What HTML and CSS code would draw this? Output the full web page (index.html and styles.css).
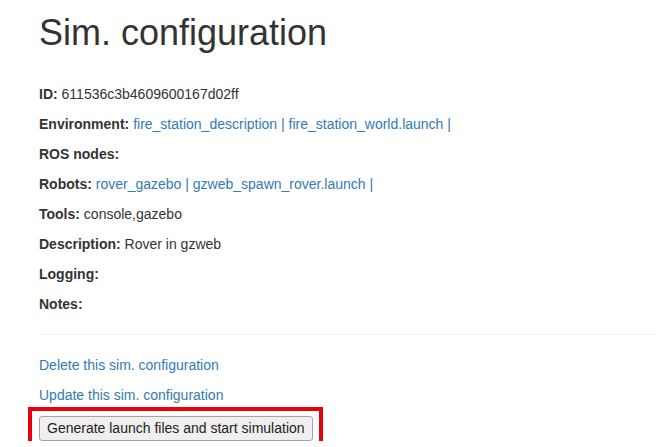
FILE: index.html
```html
<!DOCTYPE html>
<html lang="en">
<head>
<meta charset="utf-8">
<title>Sim. configuration</title>
<link rel="stylesheet" href="styles.css">
</head>
<body>
<div class="container">
  <h1 class="title">Sim. configuration</h1>
  <p class="field"><strong>ID:</strong> 611536c3b4609600167d02ff</p>
  <p class="field"><strong>Environment:</strong> <a href="#">fire_station_description</a> <span class="sep">|</span> <a href="#">fire_station_world.launch</a> <span class="sep">|</span></p>
  <p class="field"><strong>ROS nodes:</strong></p>
  <p class="field"><strong>Robots:</strong> <a href="#">rover_gazebo</a> <span class="sep">|</span> <a href="#">gzweb_spawn_rover.launch</a> <span class="sep">|</span></p>
  <p class="field"><strong>Tools:</strong> console,gazebo</p>
  <p class="field"><strong>Description:</strong> Rover in gzweb</p>
  <p class="field"><strong>Logging:</strong></p>
  <p class="field"><strong>Notes:</strong></p>
  <hr class="divider">
  <p class="field"><a href="#">Delete this sim. configuration</a></p>
  <p class="field"><a href="#">Update this sim. configuration</a></p>
  <div class="actions">
    <span class="highlight"><button class="btn" type="button">Generate launch files and start simulation</button></span>
  </div>
</div>
</body>
</html>
```
FILE: styles.css
```css
html, body {
  margin: 0;
  padding: 0;
  background: #fff;
}
body {
  font-family: "Liberation Sans", Arial, sans-serif;
  font-size: 14px;
  line-height: 20px;
  color: #333;
  overflow: hidden;
}
.container {
  padding-left: 39px;
}
.title {
  font-size: 36px;
  font-weight: normal;
  line-height: 40px;
  margin: 13px 0 31px;
  color: #333;
}
.field {
  margin: 0 0 10px;
}
.field strong {
  font-weight: bold;
}
a, .sep {
  color: #337ab7;
  text-decoration: none;
}
.divider {
  border: 0;
  border-top: 1px solid #eee;
  margin: 20px 0;
  height: 0;
}
.actions {
  padding-top: 1px;
}
.highlight {
  position: relative;
  display: inline-block;
}
.highlight::after {
  content: "";
  position: absolute;
  top: -9px;
  left: -11px;
  right: -10px;
  bottom: -8px;
  border: 4px solid #e8000b;
  pointer-events: none;
}
.btn {
  font-family: "Liberation Sans", Arial, sans-serif;
  font-size: 14px;
  line-height: 20px;
  color: #222;
  background: #efefef;
  border: 1px solid #a3a3a3;
  border-radius: 3px;
  padding: 1px 7px 2px;
  margin: 0;
  display: block;
}
```
